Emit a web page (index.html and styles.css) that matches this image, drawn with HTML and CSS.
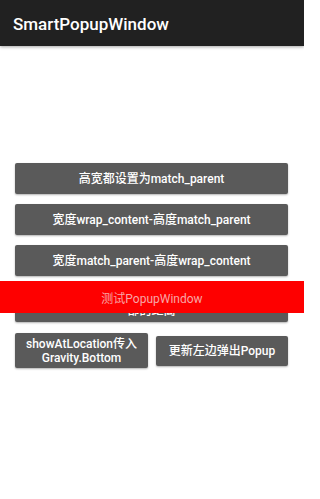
FILE: index.html
```html
<!DOCTYPE html>
<html lang="zh">
<head>
<meta charset="utf-8">
<link rel="stylesheet" href="styles.css">
</head>
<body>
<div class="page">
  <div class="appbar"><span class="title">SmartPopupWindow</span></div>
  <main class="content">
    <div class="btn">高宽都设置为match_parent</div>
    <div class="btn">宽度wrap_content-高度match_parent</div>
    <div class="btn">宽度match_parent-高度wrap_content</div>
    <div class="btn two">showAsDropDown偏移距离顶<br>部的距离</div>
    <div class="row">
      <div class="btn two half">showAtLocation传入<br>Gravity.Bottom</div>
      <div class="btn half">更新左边弹出Popup</div>
    </div>
  </main>
  <div class="popup">测试PopupWindow</div>
</div>
</body>
</html>
```
FILE: styles.css
```css
html, body {
  margin: 0;
  padding: 0;
  background: #ffffff;
  font-family: Roboto, "Noto Sans CJK SC", sans-serif;
}
.page {
  position: relative;
  width: 304px;
  height: 499px;
  overflow: hidden;
}
.appbar {
  height: 46px;
  background: #212121;
  display: flex;
  align-items: center;
  padding-left: 13px;
  box-shadow: 0 1px 3px rgba(0,0,0,0.35);
}
.title {
  color: #ffffff;
  font-size: 17px;
  font-weight: 500;
  margin-top: 1px;
}
.content {
  padding: 117px 16px 0 15px;
  display: flex;
  flex-direction: column;
}
.btn {
  height: 31px;
  margin-bottom: 10px;
  background: #5a5a5a;
  color: #ffffff;
  border-radius: 2px;
  box-shadow: 0 1px 2px rgba(0,0,0,0.3);
  display: flex;
  align-items: center;
  justify-content: center;
  text-align: center;
  font-size: 12px;
  font-weight: 500;
  line-height: 14px;
}
.btn.two {
  height: 36px;
}
.row {
  display: flex;
  align-items: center;
  gap: 8px;
  margin-top: 1px;
}
.btn.half {
  flex: 1;
  margin-bottom: 0;
  height: 30px;
}
.btn.half.two {
  height: 35px;
  flex: 0 0 133px;
}
.popup {
  position: absolute;
  left: 0;
  right: 0;
  top: 281px;
  height: 32px;
  background: #fe0000;
  color: #f8a6a6;
  font-size: 12px;
  display: flex;
  align-items: center;
  justify-content: center;
}
```
